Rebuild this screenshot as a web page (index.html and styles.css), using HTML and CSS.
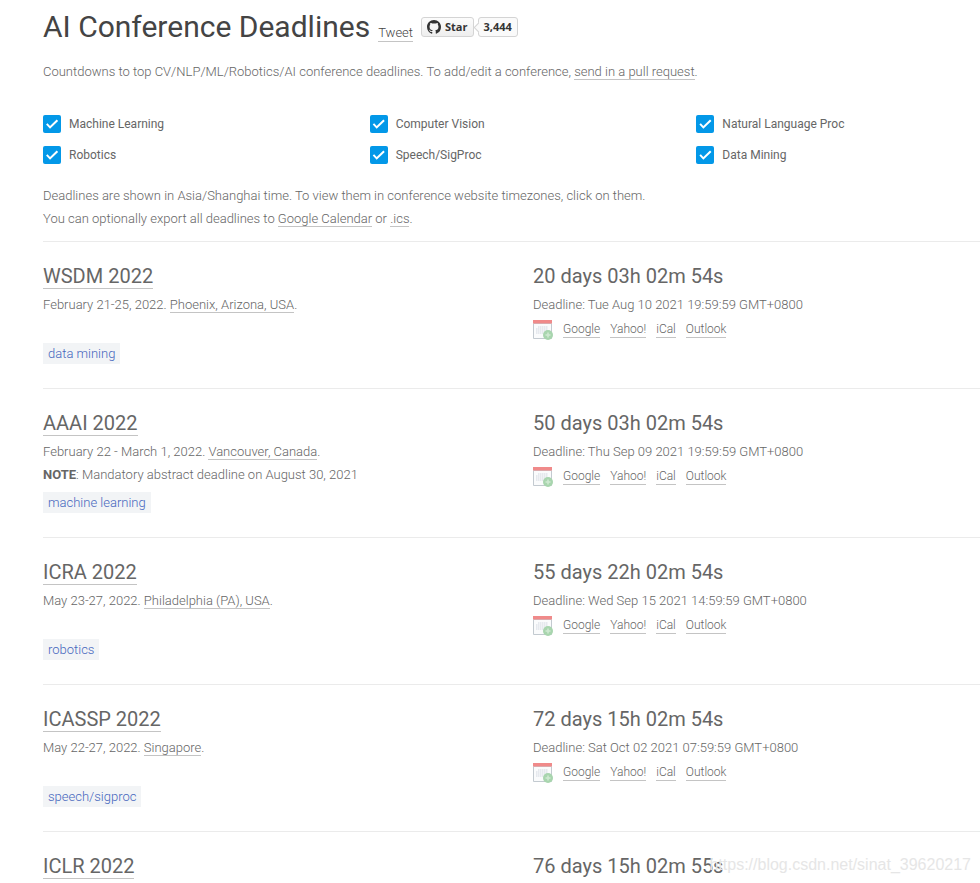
FILE: index.html
```html
<!DOCTYPE html>
<html lang="en">
<head>
  <meta charset="UTF-8">
  <meta name="viewport" content="width=device-width, initial-scale=1.0">
  <title>AI Conference Deadlines</title>
  <link rel="stylesheet" href="styles.css">
</head>
<body>
  <!-- shared icons -->
  <svg class="icon-defs" aria-hidden="true">
    <symbol id="icon-github" viewBox="0 0 16 16">
      <path fill="#333" fill-rule="evenodd" d="M8 0C3.58 0 0 3.58 0 8c0 3.54 2.29 6.53 5.47 7.59.4.07.55-.17.55-.38 0-.19-.01-.82-.01-1.49-2.01.37-2.53-.49-2.69-.94-.09-.23-.48-.94-.82-1.13-.28-.15-.68-.52-.01-.53.63-.01 1.08.58 1.23.82.72 1.21 1.87.87 2.33.66.07-.52.28-.87.51-1.07-1.78-.2-3.64-.89-3.64-3.95 0-.87.31-1.59.82-2.15-.08-.2-.36-1.02.08-2.12 0 0 .67-.21 2.2.82.64-.18 1.32-.27 2-.27s1.36.09 2 .27c1.53-1.04 2.2-.82 2.2-.82.44 1.1.16 1.92.08 2.12.51.56.82 1.27.82 2.15 0 3.07-1.87 3.75-3.65 3.95.29.25.54.73.54 1.48 0 1.07-.01 1.93-.01 2.2 0 .21.15.46.55.38A8.01 8.01 0 0 0 16 8c0-4.42-3.58-8-8-8z"/>
    </symbol>
    <symbol id="icon-calendar" viewBox="0 0 20 20">
      <path fill="#fafbfc" stroke="#c3cad0" d="M.5 3.500h18v15H.5z"/>
      <path fill="#f08a8a" d="M0 0h19v3.500H0z"/>
      <path stroke="#dfe4e9" stroke-width="1.5" stroke-dasharray="1.5 .5" d="M5 7h10M3 9h12M3 11h12M3 13h9"/>
      <circle cx="15" cy="15" r="5" fill="#a8d5ae"/>
      <path stroke="#cfe9d2" stroke-width="1.5" d="M15 12.500v5M12.500 15h5"/>
    </symbol>
  </svg>

  <div class="container">
    <header class="header">
      <h1>AI Conference Deadlines</h1>
      <a href="#" class="tweet">Tweet</a>
      <div class="github">
        <a href="#" class="gh-btn"><svg class="gh-icon" aria-hidden="true"><use href="#icon-github"/></svg>Star</a>
        <a href="#" class="gh-count">3,444</a>
      </div>
    </header>

    <p class="intro">Countdowns to top CV/NLP/ML/Robotics/AI conference deadlines. To add/edit a conference, <a href="#">send in a pull request</a>.</p>

    <!-- subject filters -->
    <form class="filters">
      <label><input type="checkbox" checked> Machine Learning</label>
      <label><input type="checkbox" checked> Computer Vision</label>
      <label><input type="checkbox" checked> Natural Language Proc</label>
      <label><input type="checkbox" checked> Robotics</label>
      <label><input type="checkbox" checked> Speech/SigProc</label>
      <label><input type="checkbox" checked> Data Mining</label>
    </form>

    <p class="timezone">Deadlines are shown in Asia/Shanghai time. To view them in conference website timezones, click on them.<br>
      You can optionally export all deadlines to <a href="#">Google Calendar</a> or <a href="#">.ics</a>.</p>

    <main>
      <section class="conf">
        <div>
          <h2><a href="#">WSDM 2022</a></h2>
          <div class="meta">February 21-25, 2022. <a href="#">Phoenix, Arizona, USA</a>.</div>
          <div class="note"></div>
          <a href="#" class="tag">data mining</a>
        </div>
        <div>
          <div class="timer">20 days 03h 02m 54s</div>
          <div class="meta">Deadline: Tue Aug 10 2021 19:59:59 GMT+0800</div>
          <div class="calendar">
            <svg class="cal-icon" aria-hidden="true"><use href="#icon-calendar"/></svg>
            <a href="#">Google</a>
            <a href="#">Yahoo!</a>
            <a href="#">iCal</a>
            <a href="#">Outlook</a>
          </div>
        </div>
      </section>

      <section class="conf">
        <div>
          <h2><a href="#">AAAI 2022</a></h2>
          <div class="meta">February 22 - March 1, 2022. <a href="#">Vancouver, Canada</a>.</div>
          <div class="note"><strong>NOTE</strong>: Mandatory abstract deadline on August 30, 2021</div>
          <a href="#" class="tag">machine learning</a>
        </div>
        <div>
          <div class="timer">50 days 03h 02m 54s</div>
          <div class="meta">Deadline: Thu Sep 09 2021 19:59:59 GMT+0800</div>
          <div class="calendar">
            <svg class="cal-icon" aria-hidden="true"><use href="#icon-calendar"/></svg>
            <a href="#">Google</a>
            <a href="#">Yahoo!</a>
            <a href="#">iCal</a>
            <a href="#">Outlook</a>
          </div>
        </div>
      </section>

      <section class="conf">
        <div>
          <h2><a href="#">ICRA 2022</a></h2>
          <div class="meta">May 23-27, 2022. <a href="#">Philadelphia (PA), USA</a>.</div>
          <div class="note"></div>
          <a href="#" class="tag">robotics</a>
        </div>
        <div>
          <div class="timer">55 days 22h 02m 54s</div>
          <div class="meta">Deadline: Wed Sep 15 2021 14:59:59 GMT+0800</div>
          <div class="calendar">
            <svg class="cal-icon" aria-hidden="true"><use href="#icon-calendar"/></svg>
            <a href="#">Google</a>
            <a href="#">Yahoo!</a>
            <a href="#">iCal</a>
            <a href="#">Outlook</a>
          </div>
        </div>
      </section>

      <section class="conf">
        <div>
          <h2><a href="#">ICASSP 2022</a></h2>
          <div class="meta">May 22-27, 2022. <a href="#">Singapore</a>.</div>
          <div class="note"></div>
          <a href="#" class="tag">speech/sigproc</a>
        </div>
        <div>
          <div class="timer">72 days 15h 02m 54s</div>
          <div class="meta">Deadline: Sat Oct 02 2021 07:59:59 GMT+0800</div>
          <div class="calendar">
            <svg class="cal-icon" aria-hidden="true"><use href="#icon-calendar"/></svg>
            <a href="#">Google</a>
            <a href="#">Yahoo!</a>
            <a href="#">iCal</a>
            <a href="#">Outlook</a>
          </div>
        </div>
      </section>

      <section class="conf conf-last">
        <div>
          <h2><a href="#">ICLR 2022</a></h2>
        </div>
        <div>
          <div class="timer">76 days 15h 02m 55s</div>
        </div>
      </section>
    </main>
  </div>

  <div class="watermark">https://blog.csdn.net/sinat_39620217</div>
</body>
</html>
```

FILE: styles.css
```css
* {
  box-sizing: border-box;
}

body {
  margin: 0;
  background: #fff;
  color: #666;
  font-family: Roboto, "Liberation Sans", sans-serif;
  font-size: 13px;
  font-weight: 300;
  line-height: 23px;
  overflow-x: hidden;
}

a {
  color: inherit;
  text-decoration: none;
  border-bottom: 1px solid #c4c4c4;
}

p {
  margin: 0;
}

.icon-defs {
  display: none;
}

/* the rows run past the right edge of the window */
.container {
  width: 100%;
  margin-left: 43px;
}

/* header */
.header {
  display: flex;
  align-items: baseline;
  gap: 8px;
  height: 60px;
  padding-top: 8px;
}

h1 {
  margin: 0;
  color: #444;
  font-size: 30px;
  font-weight: 400;
  line-height: 38px;
}

.tweet {
  color: #444;
  font-size: 13px;
  line-height: 16px;
}

.github {
  display: flex;
  align-self: flex-start;
  gap: 4px;
  margin-top: 9px;
  font-family: "Open Sans", sans-serif;
  font-size: 11px;
  font-weight: 700;
  line-height: 18px;
}

.gh-btn,
.gh-count {
  display: flex;
  align-items: center;
  color: #333;
  border: 1px solid #d4d4d4;
  border-radius: 3px;
}

.gh-btn {
  gap: 4px;
  padding: 0 5px;
  background: linear-gradient(#fcfcfc, #eee);
}

.gh-count {
  position: relative;
  padding: 0 5px;
  background: #fafafa;
}

.gh-count::before {
  content: "";
  position: absolute;
  left: -4px;
  top: 6px;
  width: 6px;
  height: 6px;
  background: #fafafa;
  border-left: 1px solid #d4d4d4;
  border-bottom: 1px solid #d4d4d4;
  transform: rotate(45deg);
}

.gh-icon {
  width: 14px;
  height: 14px;
}

/* filters */
.filters {
  display: grid;
  grid-template-columns: repeat(3, 1fr);
  row-gap: 7px;
  padding: 29px 0 17px;
}

.filters label {
  display: flex;
  align-items: center;
  gap: 8px;
  height: 24px;
  font-size: 12px;
  font-weight: 400;
}

.filters input {
  appearance: none;
  width: 18px;
  height: 18px;
  margin: 0;
  background: #0398e8;
  border-radius: 2px;
}

.filters input:checked::before {
  content: "";
  display: block;
  width: 18px;
  height: 18px;
  background: #fff;
  clip-path: polygon(17% 53%, 25% 46%, 39% 61%, 76% 25%, 84% 33%, 39% 77%);
}

/* conference list */
.timezone {
  padding-bottom: 11px;
}

.conf {
  display: grid;
  grid-template-columns: 1fr 1fr;
  padding: 19px 0 24px;
  border-top: 1px solid #ebebeb;
}

.conf-last {
  padding-bottom: 0;
}

h2,
.timer {
  margin: 0 0 1px;
  color: #666;
  font-size: 20px;
  font-weight: 400;
  line-height: 31px;
}

.note {
  min-height: 21px;
}

.note strong {
  font-weight: 700;
}

.tag {
  display: block;
  width: fit-content;
  margin-top: 6px;
  padding: 0 5px;
  background: #f2f4f6;
  border: 0;
  color: #4566bd;
  line-height: 21px;
}

.calendar {
  display: flex;
  align-items: center;
  gap: 10px;
  height: 27px;
  font-size: 12px;
}

.calendar a {
  line-height: 15px;
}

.cal-icon {
  width: 20px;
  height: 20px;
}

.watermark {
  position: absolute;
  right: 9px;
  bottom: 8px;
  color: #e6e6e6;
  font-family: "Liberation Sans", Arial, sans-serif;
  font-size: 16px;
  font-weight: 400;
  line-height: 20px;
}
```
